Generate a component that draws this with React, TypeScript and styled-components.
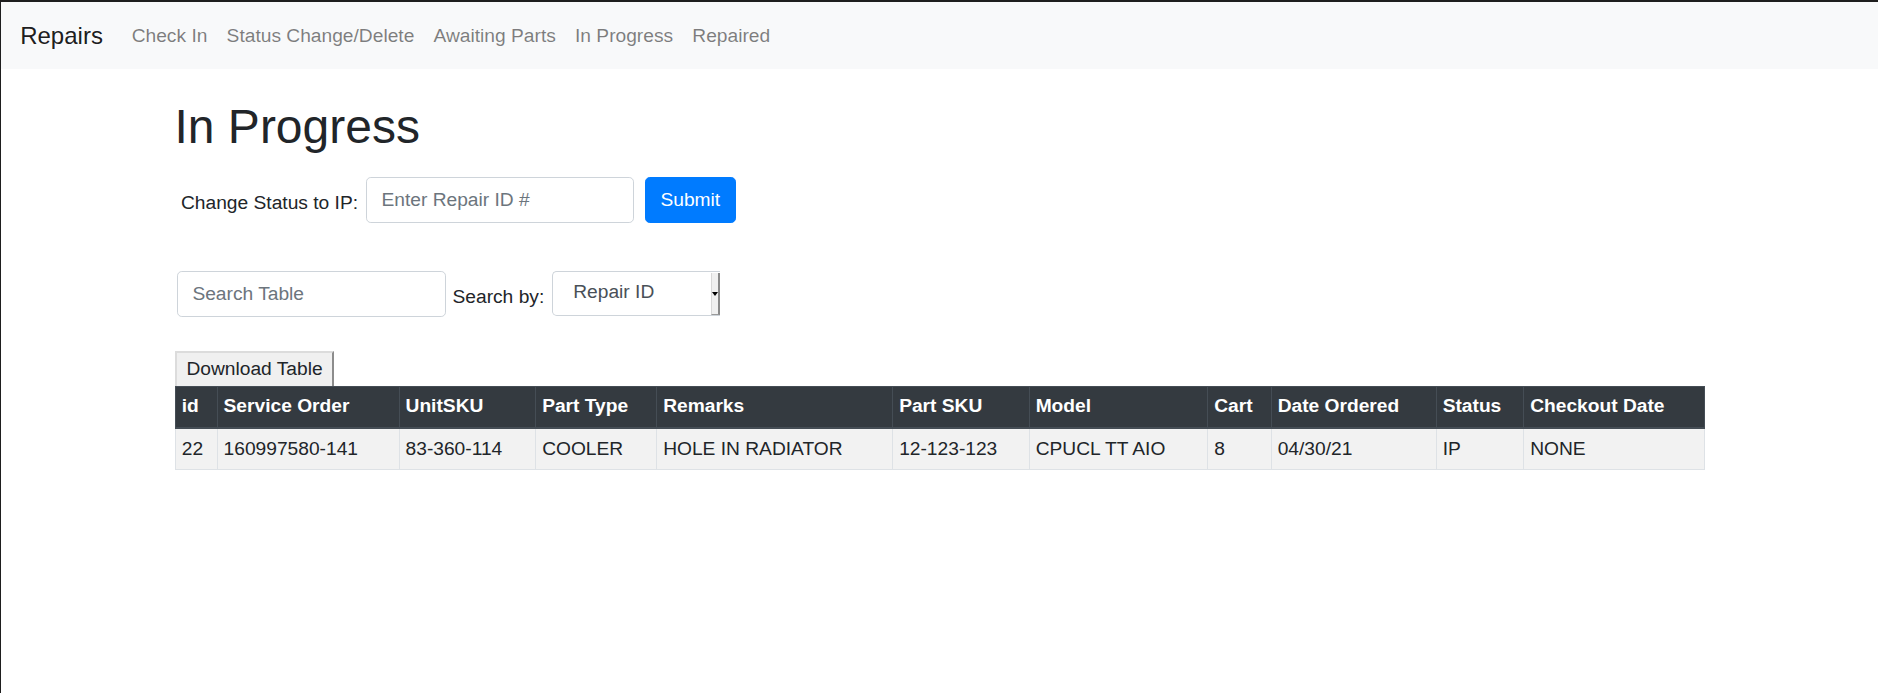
import React from "react";
import styled, { createGlobalStyle } from "styled-components";

const GlobalStyle = createGlobalStyle`
  *, *::before, *::after { box-sizing: border-box; }
  html, body { margin: 0; padding: 0; }
  body {
    font-family: "Liberation Sans", Arial, sans-serif;
    font-size: 19.2px;
    line-height: 1.5;
    color: #212529;
    background: #fff;
    border-top: 2px solid #1e1e1e;
    border-left: 1px solid #1e1e1e;
    min-height: 100vh;
  }
`;

const Navbar = styled.nav`
  display: flex;
  align-items: center;
  padding: 9.6px 19.2px;
  background: #f8f9fa;
`;

const Brand = styled.a`
  font-size: 24px;
  line-height: 36px;
  padding: 6.5px 0 5.5px;
  margin-right: 19.2px;
  color: rgba(0, 0, 0, 0.9);
  text-decoration: none;
  white-space: nowrap;
`;

const NavList = styled.ul`
  display: flex;
  list-style: none;
  margin: 0;
  padding: 0;
`;

const NavLink = styled.a`
  display: block;
  padding: 10.8px 9.6px 8.4px;
  line-height: 28.8px;
  color: rgba(0, 0, 0, 0.5);
  text-decoration: none;
  white-space: nowrap;
`;

const Main = styled.main`
  padding: 28.8px 174px 0 174px;
`;

const Heading = styled.h1`
  font-size: 48px;
  font-weight: 400;
  line-height: 57.6px;
  margin: 0 0 9.6px -0.5px;
`;

const FormRow = styled.form<{ $top: number; $indent: number }>`
  display: flex;
  align-items: center;
  margin-top: ${(p) => p.$top}px;
  padding-left: ${(p) => p.$indent}px;
`;

const Label = styled.label<{ $left: number }>`
  font-size: 19.2px;
  padding-top: 7px;
  margin: 0 8px 0 ${(p) => p.$left}px;
  white-space: nowrap;
`;

const TextInput = styled.input<{ $w: number }>`
  width: ${(p) => p.$w}px;
  height: 46px;
  padding: 0 14.4px;
  border: 1px solid #ced4da;
  border-radius: 4.8px;
  font-family: inherit;
  font-size: 19.2px;
  color: #495057;
  background: #fff;
  outline: none;
  &::placeholder { color: #6c757d; }
`;

const PrimaryButton = styled.button`
  margin-left: 11.5px;
  height: 46px;
  padding: 0 14.4px;
  background: #007bff;
  border: 1px solid #007bff;
  border-radius: 4.8px;
  color: #fff;
  font-family: inherit;
  font-size: 19.2px;
  cursor: pointer;
`;

const Select = styled.div`
  display: flex;
  align-items: stretch;
  width: 168px;
  height: 45px;
  border: 1px solid #ced4da;
  border-right: none;
  border-radius: 4.8px 0 0 4.8px;
  background: #fff;
`;

const SelectValue = styled.span`
  flex: 1;
  display: flex;
  align-items: center;
  padding-left: 20px;
  color: #495057;
  font-size: 19.2px;
  margin-top: -3px;
`;

const SelectArrow = styled.span`
  width: 9px;
  margin: 1px 0 0 0;
  display: flex;
  align-items: center;
  justify-content: center;
  background: #f0f0f0;
  border-left: 1px solid #d8d8d8;
  border-right: 2px solid #8a8a8a;
  border-bottom: 1px solid #9a9a9a;
  &::after {
    content: "";
    display: block;
    border-left: 3px solid transparent;
    border-right: 3px solid transparent;
    border-top: 4px solid #000;
    margin-left: -1px;
  }
`;

const DownloadButton = styled.button`
  display: block;
  margin-top: 34.4px;
  height: 34.5px;
  padding: 0 9.4px;
  font-family: inherit;
  font-size: 19.2px;
  color: #212529;
  background: #f0f0f0;
  border-style: solid;
  border-width: 2px 2px 0 2px;
  border-color: #dcdcdc #8c8c8c #8c8c8c #dcdcdc;
  cursor: pointer;
`;

const Table = styled.table`
  width: 1529px;
  table-layout: fixed;
  border-collapse: collapse;
  font-size: 19.2px;
  line-height: 28.8px;
`;

const Col = styled.col<{ $w: number }>`
  width: ${(p) => p.$w}px;
`;

const HeadCell = styled.th`
  padding: 5.76px;
  text-align: left;
  font-weight: 700;
  color: #fff;
  background: #343a40;
  border: 1px solid #454d55;
  border-bottom-width: 2px;
  white-space: nowrap;
  overflow: hidden;
`;

const BodyRow = styled.tr`
  background: #f2f2f2;
`;

const Cell = styled.td`
  padding: 5.76px;
  border: 1px solid #dee2e6;
  white-space: nowrap;
  overflow: hidden;
`;

const columns: { label: string; w: number }[] = [
  { label: "id", w: 41.8 },
  { label: "Service Order", w: 182 },
  { label: "UnitSKU", w: 136.6 },
  { label: "Part Type", w: 121 },
  { label: "Remarks", w: 236 },
  { label: "Part SKU", w: 136.5 },
  { label: "Model", w: 178.5 },
  { label: "Cart", w: 63.5 },
  { label: "Date Ordered", w: 165 },
  { label: "Status", w: 87.5 },
  { label: "Checkout Date", w: 181 },
];

const rows: string[][] = [
  [
    "22",
    "160997580-141",
    "83-360-114",
    "COOLER",
    "HOLE IN RADIATOR",
    "12-123-123",
    "CPUCL TT AIO",
    "8",
    "04/30/21",
    "IP",
    "NONE",
  ],
];

const navItems = [
  "Check In",
  "Status Change/Delete",
  "Awaiting Parts",
  "In Progress",
  "Repaired",
];

export default function App() {
  return (
    <>
      <GlobalStyle />
      <Navbar>
        <Brand href="#">Repairs</Brand>
        <NavList>
          {navItems.map((n) => (
            <li key={n}>
              <NavLink href="#">{n}</NavLink>
            </li>
          ))}
        </NavList>
      </Navbar>
      <Main>
        <Heading>In Progress</Heading>
        <FormRow $top={21.6} $indent={0} onSubmit={(e) => e.preventDefault()}>
          <Label $left={6}>Change Status to IP:</Label>
          <TextInput $w={267.5} placeholder="Enter Repair ID #" />
          <PrimaryButton type="submit">Submit</PrimaryButton>
        </FormRow>
        <FormRow $top={47.5} $indent={2} onSubmit={(e) => e.preventDefault()}>
          <TextInput $w={268.5} placeholder="Search Table" />
          <Label $left={7}>Search by:</Label>
          <Select>
            <SelectValue>Repair ID</SelectValue>
            <SelectArrow />
          </Select>
        </FormRow>
        <DownloadButton type="button">Download Table</DownloadButton>
        <Table>
          <colgroup>
            {columns.map((c) => (
              <Col key={c.label} $w={c.w} />
            ))}
          </colgroup>
          <thead>
            <tr>
              {columns.map((c) => (
                <HeadCell key={c.label}>{c.label}</HeadCell>
              ))}
            </tr>
          </thead>
          <tbody>
            {rows.map((r, i) => (
              <BodyRow key={i}>
                {r.map((v, j) => (
                  <Cell key={j}>{v}</Cell>
                ))}
              </BodyRow>
            ))}
          </tbody>
        </Table>
      </Main>
    </>
  );
}
